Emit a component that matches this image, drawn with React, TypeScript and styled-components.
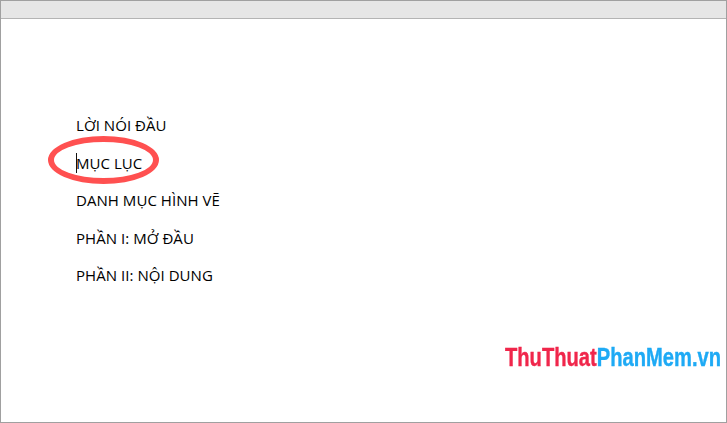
import React from 'react';
import styled, {createGlobalStyle} from 'styled-components';

const GlobalStyle = createGlobalStyle`
    html, body {
        margin: 0;
        padding: 0;
        background: #fff;
    }
`

const headings = ['LỜI NÓI ĐẦU', 'MỤC LỤC', 'DANH MỤC HÌNH VẼ', 'PHẦN I: MỞ ĐẦU', 'PHẦN II: NỘI DUNG'];

export default function App() {
    return (
        <>
            <GlobalStyle />
            <Window>
                <Ruler />
                <Sheet>
                    <HeadingList>
                        {headings.map((text, i) => (
                            <Heading key={text}>
                                {i === 1 && <Caret />}
                                {i === 1 && <Circle />}
                                {text}
                            </Heading>
                        ))}
                    </HeadingList>
                    <Logo>
                        <LogoRed>ThuThuat</LogoRed><LogoBlue>PhanMem.vn</LogoBlue>
                    </Logo>
                </Sheet>
            </Window>
        </>
    );
}

const Window = styled.div`
    width: 727px;
    height: 423px;
    box-sizing: border-box;
    border: 1px solid #a0a0a0;
    display: flex;
    flex-direction: column;
    overflow: hidden;
`
const Ruler = styled.div`
    height: 17px;
    flex: none;
    background-color: #e6e6e6;
    border-bottom: 1px solid #b4b4b4;
`
const Sheet = styled.div`
    flex: 1;
    display: flex;
    flex-direction: column;
    padding: 96px 0 0 75px;
`
const HeadingList = styled.div`
    display: flex;
    flex-direction: column;
    gap: 17.5px;
`
const Heading = styled.div`
    position: relative;
    height: 20px;
    font-family: "Open Sans", sans-serif;
    font-size: 15px;
    line-height: 20px;
    letter-spacing: 0.05px;
    color: #000;
    white-space: nowrap;
`
const Caret = styled.span`
    position: absolute;
    left: 0;
    top: 0;
    width: 1px;
    height: 20px;
    background-color: #111;
`
const Circle = styled.span`
    position: absolute;
    left: -28px;
    top: -17px;
    width: 111px;
    height: 48px;
    box-sizing: border-box;
    border: 6px solid #ff5050;
    border-radius: 50%;
`
const Logo = styled.div`
    margin: 57px 0 0 429px;
    font-family: "Liberation Sans", sans-serif;
    font-size: 26px;
    font-weight: bold;
    line-height: 30px;
    white-space: nowrap;
    transform: scaleX(0.775);
    transform-origin: left;
    filter: blur(0.4px);
    -webkit-text-stroke: 0.4px currentColor;
`
const LogoRed = styled.span`
    color: #f0264b;
`
const LogoBlue = styled.span`
    color: #1eaaf5;
`
